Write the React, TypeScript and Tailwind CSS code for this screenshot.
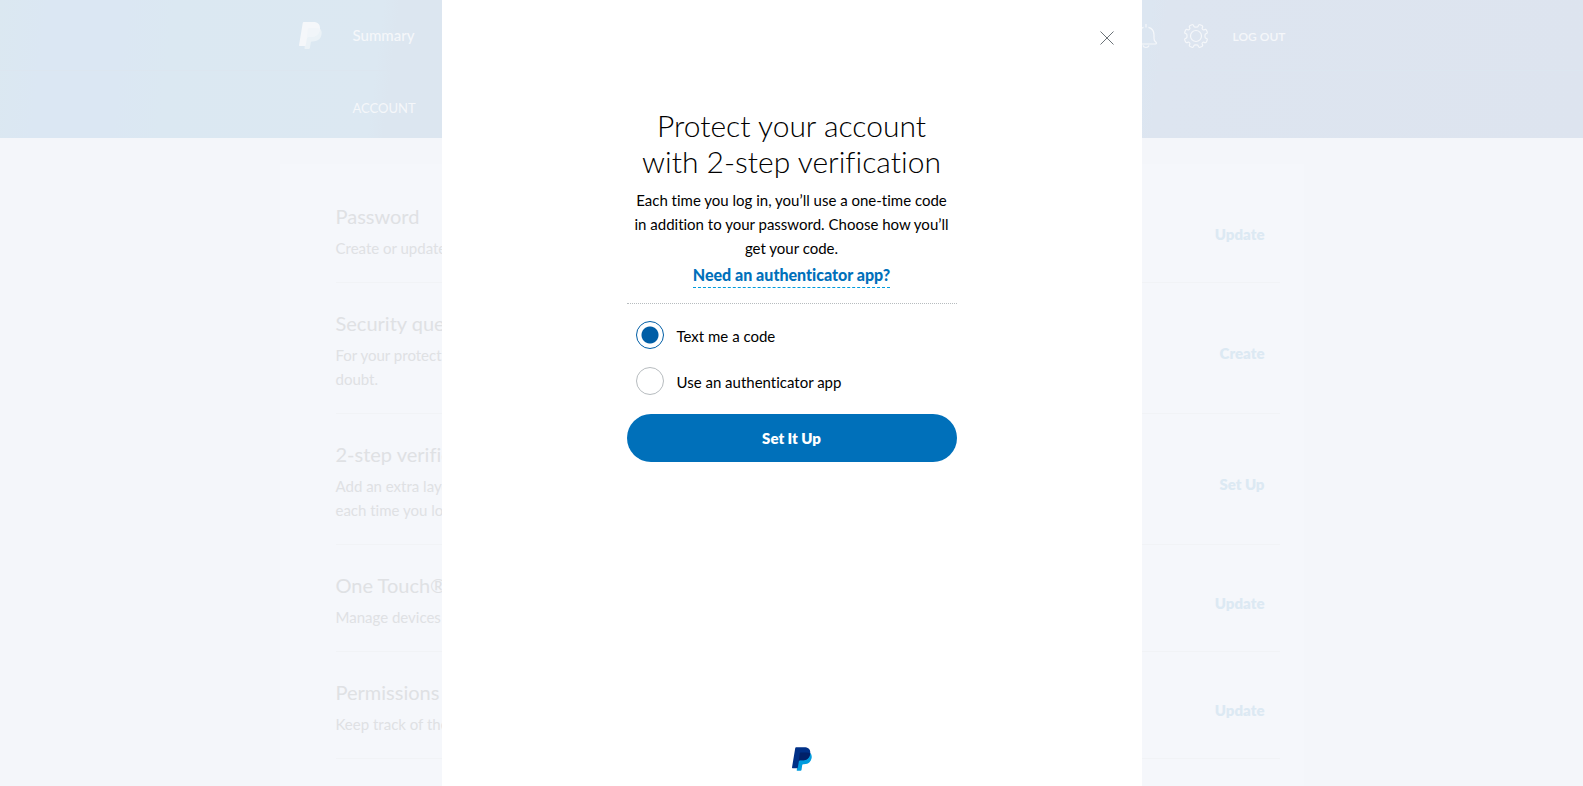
import { useState } from 'react'

interface Setting {
  title: string
  lines: string[]
  action: string
}

const settings: Setting[] = [
  { title: 'Password', lines: ['Create or update'], action: 'Update' },
  { title: 'Security questions', lines: ['For your protection', 'doubt.'], action: 'Create' },
  { title: '2-step verification', lines: ['Add an extra layer', 'each time you log'], action: 'Set Up' },
  { title: 'One Touch®', lines: ['Manage devices'], action: 'Update' },
  { title: 'Permissions', lines: ['Keep track of the'], action: 'Update' }
]

const methods = [
  { id: 'sms', label: 'Text me a code' },
  { id: 'app', label: 'Use an authenticator app' }
]

interface LogoProps {
  className: string
  front: string
  back: string
  overlap: string
}

function Logo({ className, front, back, overlap }: LogoProps) {
  return (
    <svg viewBox="0 0 24 28" className={className} aria-hidden="true">
      <path fill={back} d="M22.200 7.200c1.300 1.500 1.800 3.400 1.300 5.800-1.100 5.300-4.500 7.200-9.300 7.200h-.8c-.6 0-1 .4-1.100 1l-.9 5.900c-.1.500-.5.900-1 .9H6.300c-.4 0-.7-.3-.6-.8L8.700 7.200z" />
      <path fill={front} d="M3.900.9C4 .4 4.400 0 4.900 0h9.600c5.100 0 8.100 2.500 7.300 7.600-.9 5.500-4.400 7.900-9.600 7.900H9.600c-.7 0-1.200.5-1.300 1.100L7 24.300c-.1.400-.4.700-.8.700H.6c-.4 0-.7-.3-.6-.8z" />
      <path fill={overlap} d="M9.200 7.400c.1-.8.700-1.300 1.400-1.300h6.900c1.700 0 3.200.3 4.400.9-.7 5.900-4.400 8.500-9.700 8.500H9.600c-.7 0-1.200.4-1.500 1z" />
    </svg>
  )
}

function BellIcon() {
  return (
    <svg viewBox="0 0 26 26" className="size-[26px]" fill="none" stroke="currentColor" strokeWidth="1.200" aria-hidden="true">
      <path d="M13 1v3.500M10.500 4.300C7 5.200 5 8.200 5 12v3.500c0 1.700-.6 2.700-1.800 3.600-.8.600-.9 1.900.3 1.900h19c1.200 0 1.100-1.300.3-1.900-1.200-.9-1.800-1.900-1.800-3.600V12c0-3.800-2-6.800-5.500-7.700M10 22.500c.5 1.300 1.600 2 3 2s2.500-.7 3-2" />
    </svg>
  )
}

function GearIcon() {
  return (
    <svg viewBox="0 0 26 26" className="size-[26px]" fill="none" stroke="currentColor" strokeWidth="1.200" strokeLinejoin="round" aria-hidden="true">
      <circle cx="13" cy="13" r="5.500" />
      <path d="M10.900 3.300c-.3-1.400-1-1.900-2-1.500l-1.700.7c-1 .4-1.200 1.300-.4 2.400.5.900-1 2.400-1.900 1.900-1.100-.8-2-.6-2.400.4l-.7 1.700c-.4 1 .1 1.700 1.500 2 1 .2 1 4 0 4.200-1.400.3-1.900 1-1.500 2l.7 1.700c.4 1 1.300 1.200 2.400.4.900-.5 2.400 1 1.900 1.900-.8 1.100-.6 2 .4 2.400l1.700.7c1 .4 1.700-.1 2-1.500.2-1 4-1 4.200 0 .3 1.400 1 1.900 2 1.500l1.700-.7c1-.4 1.200-1.300.4-2.400-.5-.9 1-2.400 1.900-1.900 1.100.8 2 .6 2.400-.4l.7-1.700c.4-1-.1-1.700-1.500-2-1-.2-1-4 0-4.200 1.400-.3 1.900-1 1.500-2l-.7-1.700c-.4-1-1.300-1.200-2.400-.4-.9.500-2.400-1-1.900-1.900.8-1.100.6-2-.4-2.400l-1.700-.7c-1-.4-1.700.1-2 1.500-.2 1-4 1-4.200 0z" />
    </svg>
  )
}

function Header() {
  return (
    <header className="bg-[linear-gradient(97deg,#dbe8f1_0%,#dbe7f3_3%,#dbe7f3_8%,#dbe8f2_11%,#dce8f2_24%,#dce6f0_25%,#dce6f1_72%,#dde5f0_73%,#dde4ef_100%)] text-[#f5f7fa]">
      <div className="border-b border-[#dce6f0]">
        <div className="mx-auto flex h-[70px] max-w-[1024px] items-center px-[18px] pt-px">
          <a href="#home" aria-label="Home" className="pl-px">
            <Logo className="h-[27px] w-[23px]" front="#f5f7fa" back="#ebf2f7" overlap="#f1f5f9" />
          </a>
          <a href="#summary" className="ml-[31px] text-[15px] font-medium">Summary</a>
          <div className="ml-auto flex items-center gap-6">
            <button type="button" aria-label="Notifications"><BellIcon /></button>
            <button type="button" aria-label="Settings"><GearIcon /></button>
            <a href="#logout" className="pt-0.5 text-xs font-semibold">LOG OUT</a>
          </div>
        </div>
      </div>
      <nav className="mx-auto flex h-[67px] max-w-[1024px] items-center px-[73px] pt-2">
        <a href="#account" className="text-[13px]">ACCOUNT</a>
      </nav>
    </header>
  )
}

function SettingRow({ title, lines, action }: Setting) {
  return (
    <li className="flex items-center justify-between border-b border-[#f1f3f6] pt-[26px] pr-[15px] pb-[22px]">
      <div>
        <h2 className="text-xl leading-7">{title}</h2>
        <p className="mt-1.5 text-[15px] leading-6">
          {lines.map((line) => (
            <span key={line} className="block">{line}</span>
          ))}
        </p>
      </div>
      <a href="#edit" className="pt-1.5 text-[15px] font-extrabold text-[#dce9f3]">{action}</a>
    </li>
  )
}

function TwoStepDialog() {
  const [method, setMethod] = useState('sms')

  return (
    <div role="dialog" aria-modal="true" aria-labelledby="dialog-title" className="relative flex h-full w-full max-w-[700px] flex-col items-center bg-white px-4 pt-[107px] pb-[15px] text-black">
      <button type="button" aria-label="Close" className="absolute top-[27px] right-6 p-1">
        <svg viewBox="0 0 14 14" className="size-[14px]" stroke="#6c7378" strokeWidth="1" aria-hidden="true">
          <path d="M.5.5l13 13M13.500.5l-13 13" />
        </svg>
      </button>

      <form className="w-full max-w-[330px]" onSubmit={(e) => e.preventDefault()}>
        <h1 id="dialog-title" className="text-center text-[30px] leading-9 font-light">
          Protect your account<br />with 2-step verification
        </h1>
        <p className="mt-[9px] px-1 text-center text-[15px] leading-6">
          Each time you log in, you’ll use a one-time code in addition to your password. Choose how you’ll get your code.
        </p>
        <div className="mt-[3px] text-center">
          <a href="#authenticator" className="inline-block border-b border-dashed border-[#009cde] pb-px text-base leading-[22px] font-black text-[#0070ba]">
            Need an authenticator app?
          </a>
        </div>

        <fieldset aria-label="Verification method" className="mt-[15px] border-t border-dotted border-[#b7bcbf] pt-[17px] pb-px pl-[9px]">
          {methods.map((m) => (
            <label key={m.id} className="mb-[18px] flex h-7 items-center gap-[13px] text-[15px]">
              <input
                type="radio"
                name="method"
                value={m.id}
                checked={method === m.id}
                onChange={() => setMethod(m.id)}
                className="size-7 appearance-none rounded-full border border-[#b7bcbf] bg-white checked:border-[#005ea6] checked:bg-[radial-gradient(circle,#005ea6_8px,white_9px)]"
              />
              <span className="pt-0.5">{m.label}</span>
            </label>
          ))}
        </fieldset>

        <button type="submit" className="h-12 w-full rounded-full bg-[#0070ba] text-[15px] font-extrabold text-white">
          Set It Up
        </button>
      </form>

      <div className="mt-auto pl-5">
        <Logo className="h-6 w-5" front="#003087" back="#009cde" overlap="#012169" />
      </div>
    </div>
  )
}

export default function App() {
  return (
    <div className="h-screen overflow-hidden bg-[#f4f6fa] font-[Lato,'Open_Sans',sans-serif] text-[#dfe1e4] [font-variant-ligatures:none]">
      <Header />
      <main className="mx-auto mt-[26px] max-w-[1024px] bg-[#f5f7fb] px-6 pt-3 pb-20 pl-14">
        <ul>
          {settings.map((s) => (
            <SettingRow key={s.title} {...s} />
          ))}
        </ul>
      </main>

      {/* Modal sits over the faded page */}
      <div className="fixed inset-0 flex justify-center">
        <TwoStepDialog />
      </div>
    </div>
  )
}
